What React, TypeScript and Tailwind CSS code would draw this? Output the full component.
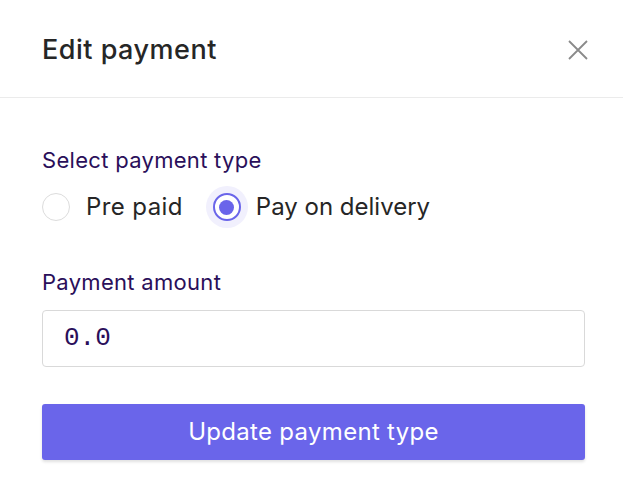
import React from "react";

export default function App() {
  return (
    <div className="w-[623px] h-[498px] bg-white font-['Inter',sans-serif]">
      <div className="h-[98px] border-b border-[#ebebeb] flex items-center justify-between pl-[42px] pr-[35px]">
        <h1 className="text-[27px] text-[#262626] font-medium tracking-[0.5px] pt-[3px]">Edit payment</h1>
        <svg width="20" height="20" viewBox="0 0 20 20" className="mt-[2px]">
          <path d="M1 1L19 19M19 1L1 19" stroke="#8a8a8a" strokeWidth="1.8" />
        </svg>
      </div>
      <div className="pl-[42px] pr-[38px] pt-[50px] flex flex-col">
        <div className="text-[22px] text-[#2a0f5a] leading-[24px] tracking-[0.3px]">Select payment type</div>
        <div className="flex items-center mt-[14px] h-[42px]">
          <label className="flex items-center">
            <span className="w-[28px] h-[28px] rounded-full border border-[#dcdcdc] bg-white" />
            <span className="ml-[16px] text-[24px] text-[#262626] tracking-[0.4px]">Pre paid</span>
          </label>
          <label className="flex items-center ml-[23px]">
            <span className="w-[42px] h-[42px] rounded-full bg-[#f1f0fd] flex items-center justify-center">
              <span className="w-[28px] h-[28px] rounded-full border-2 border-[#6a65ea] bg-white flex items-center justify-center">
                <span className="w-[15px] h-[15px] rounded-full bg-[#6a65ea]" />
              </span>
            </span>
            <span className="ml-[8px] text-[24px] text-[#262626]">Pay on delivery</span>
          </label>
        </div>
        <div className="mt-[42px] text-[22px] text-[#2a0f5a] leading-[24px] tracking-[0.3px]">Payment amount</div>
        <div className="mt-[16px] h-[57px] border border-[#d9d9d9] rounded-[4px] flex items-center px-[21px]">
          <span className="font-['Liberation_Mono',monospace] text-[26px] text-[#2a0f5a]">0.0</span>
        </div>
        <button className="mt-[37px] h-[56px] rounded-[3px] bg-[#6a65ea] text-white text-[24px] tracking-[0.3px] shadow-[0_2px_3px_rgba(0,0,0,0.12)] flex items-center justify-center">
          Update payment type
        </button>
      </div>
    </div>
  );
}
